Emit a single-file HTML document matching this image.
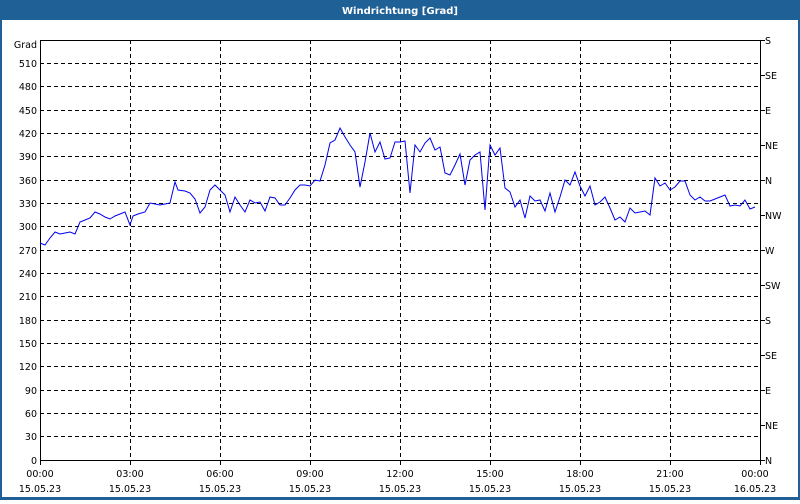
<!DOCTYPE html>
<html><head><meta charset="utf-8"><style>
body{margin:0;width:800px;height:500px;overflow:hidden;background:#fff;font-family:"DejaVu Sans","Liberation Sans",sans-serif}
</style></head><body>
<svg width="800" height="500" xmlns="http://www.w3.org/2000/svg" font-family="DejaVu Sans, Liberation Sans, sans-serif" font-size="9.5">
<rect x="0" y="0" width="800" height="500" fill="#1f6096"/>
<rect x="2" y="20" width="796" height="477" fill="#fff"/>
<text x="400" y="14" fill="#fff" font-weight="bold" font-size="10" text-anchor="middle">Windrichtung [Grad]</text>
<g stroke="#000" stroke-dasharray="4,3" stroke-width="1">
<line x1="40" x2="760" y1="436.5" y2="436.5"/><line x1="40" x2="760" y1="413.5" y2="413.5"/><line x1="40" x2="760" y1="390.5" y2="390.5"/><line x1="40" x2="760" y1="366.5" y2="366.5"/><line x1="40" x2="760" y1="343.5" y2="343.5"/><line x1="40" x2="760" y1="320.5" y2="320.5"/><line x1="40" x2="760" y1="296.5" y2="296.5"/><line x1="40" x2="760" y1="273.5" y2="273.5"/><line x1="40" x2="760" y1="250.5" y2="250.5"/><line x1="40" x2="760" y1="226.5" y2="226.5"/><line x1="40" x2="760" y1="203.5" y2="203.5"/><line x1="40" x2="760" y1="180.5" y2="180.5"/><line x1="40" x2="760" y1="156.5" y2="156.5"/><line x1="40" x2="760" y1="133.5" y2="133.5"/><line x1="40" x2="760" y1="110.5" y2="110.5"/><line x1="40" x2="760" y1="86.5" y2="86.5"/><line x1="40" x2="760" y1="63.5" y2="63.5"/>
<line y1="40" y2="460" x1="130.5" x2="130.5"/><line y1="40" y2="460" x1="220.5" x2="220.5"/><line y1="40" y2="460" x1="310.5" x2="310.5"/><line y1="40" y2="460" x1="400.5" x2="400.5"/><line y1="40" y2="460" x1="490.5" x2="490.5"/><line y1="40" y2="460" x1="580.5" x2="580.5"/><line y1="40" y2="460" x1="670.5" x2="670.5"/>
</g>
<rect x="40.5" y="40.5" width="720" height="420" fill="none" stroke="#000"/>
<g stroke="#000">
<line x1="40.5" x2="40.5" y1="460" y2="465"/><line x1="130.5" x2="130.5" y1="460" y2="465"/><line x1="220.5" x2="220.5" y1="460" y2="465"/><line x1="310.5" x2="310.5" y1="460" y2="465"/><line x1="400.5" x2="400.5" y1="460" y2="465"/><line x1="490.5" x2="490.5" y1="460" y2="465"/><line x1="580.5" x2="580.5" y1="460" y2="465"/><line x1="670.5" x2="670.5" y1="460" y2="465"/><line x1="760.5" x2="760.5" y1="460" y2="465"/>
<line x1="760" x2="765" y1="40.5" y2="40.5"/><line x1="760" x2="765" y1="75.5" y2="75.5"/><line x1="760" x2="765" y1="110.5" y2="110.5"/><line x1="760" x2="765" y1="145.5" y2="145.5"/><line x1="760" x2="765" y1="180.5" y2="180.5"/><line x1="760" x2="765" y1="215.5" y2="215.5"/><line x1="760" x2="765" y1="250.5" y2="250.5"/><line x1="760" x2="765" y1="285.5" y2="285.5"/><line x1="760" x2="765" y1="320.5" y2="320.5"/><line x1="760" x2="765" y1="355.5" y2="355.5"/><line x1="760" x2="765" y1="390.5" y2="390.5"/><line x1="760" x2="765" y1="425.5" y2="425.5"/><line x1="760" x2="765" y1="460.5" y2="460.5"/>
</g>
<g text-anchor="end">
<text x="37" y="48">Grad</text><text x="37" y="67">510</text><text x="37" y="90">480</text><text x="37" y="114">450</text><text x="37" y="137">420</text><text x="37" y="160">390</text><text x="37" y="184">360</text><text x="37" y="207">330</text><text x="37" y="230">300</text><text x="37" y="254">270</text><text x="37" y="277">240</text><text x="37" y="300">210</text><text x="37" y="324">180</text><text x="37" y="347">150</text><text x="37" y="370">120</text><text x="37" y="394">90</text><text x="37" y="417">60</text><text x="37" y="440">30</text><text x="37" y="464">0</text>
</g>
<g>
<text x="765" y="44">S</text><text x="765" y="79">SE</text><text x="765" y="114">E</text><text x="765" y="149">NE</text><text x="765" y="184">N</text><text x="765" y="219">NW</text><text x="765" y="254">W</text><text x="765" y="289">SW</text><text x="765" y="324">S</text><text x="765" y="359">SE</text><text x="765" y="394">E</text><text x="765" y="429">NE</text><text x="765" y="464">N</text>
</g>
<g text-anchor="middle">
<text x="40" y="477">00:00</text><text x="130" y="477">03:00</text><text x="220" y="477">06:00</text><text x="310" y="477">09:00</text><text x="400" y="477">12:00</text><text x="490" y="477">15:00</text><text x="580" y="477">18:00</text><text x="670" y="477">21:00</text><text x="755" y="477">00:00</text>
<text x="40" y="492">15.05.23</text><text x="130" y="492">15.05.23</text><text x="220" y="492">15.05.23</text><text x="310" y="492">15.05.23</text><text x="400" y="492">15.05.23</text><text x="490" y="492">15.05.23</text><text x="580" y="492">15.05.23</text><text x="670" y="492">15.05.23</text><text x="755" y="492">16.05.23</text>
</g>
<polyline fill="none" stroke="#0000ee" stroke-width="1" points="40,243 45,245 50,238 55,232 60,234 65,233 70,232 75,234 80,222 85,220 90,218 95,212 100,214 105,217 110,219 115,216 120,214 125,212 130,225 133,216 138,214 145,212 150,203 155,204 160,205 165,204 170,203 175,182 178,190 185,191 190,193 195,199 200,213 205,207 210,190 215,185 220,190 225,195 230,212 235,197 240,205 245,212 250,200 255,203 260,202 265,211 270,197 275,198 280,205 285,205 290,198 295,190 300,185 305,185 310,186 315,180 320,181 325,165 330,143 335,140 340,128 345,137 350,145 355,152 360,187 365,162 370,133 375,152 380,142 385,159 390,158 395,142 400,142 405,141 410,193 415,145 420,152 425,143 430,138 435,150 440,147 445,173 450,175 455,165 460,154 465,185 470,160 475,155 480,152 485,210 490,145 495,155 500,148 505,188 510,192 515,207 520,200 525,218 530,196 535,201 540,200 545,211 550,193 555,212 560,197 565,180 570,185 575,172 580,186 585,196 590,186 595,205 600,202 605,197 610,208 615,220 620,217 625,222 630,208 635,213 640,212 645,211 650,215 655,178 660,186 665,183 670,190 675,187 680,181 685,181 690,195 695,200 700,197 705,201 710,201 715,199 720,197 725,195 730,206 735,205 740,206 745,200 750,209 755,207"/>
</svg>
</body></html>
